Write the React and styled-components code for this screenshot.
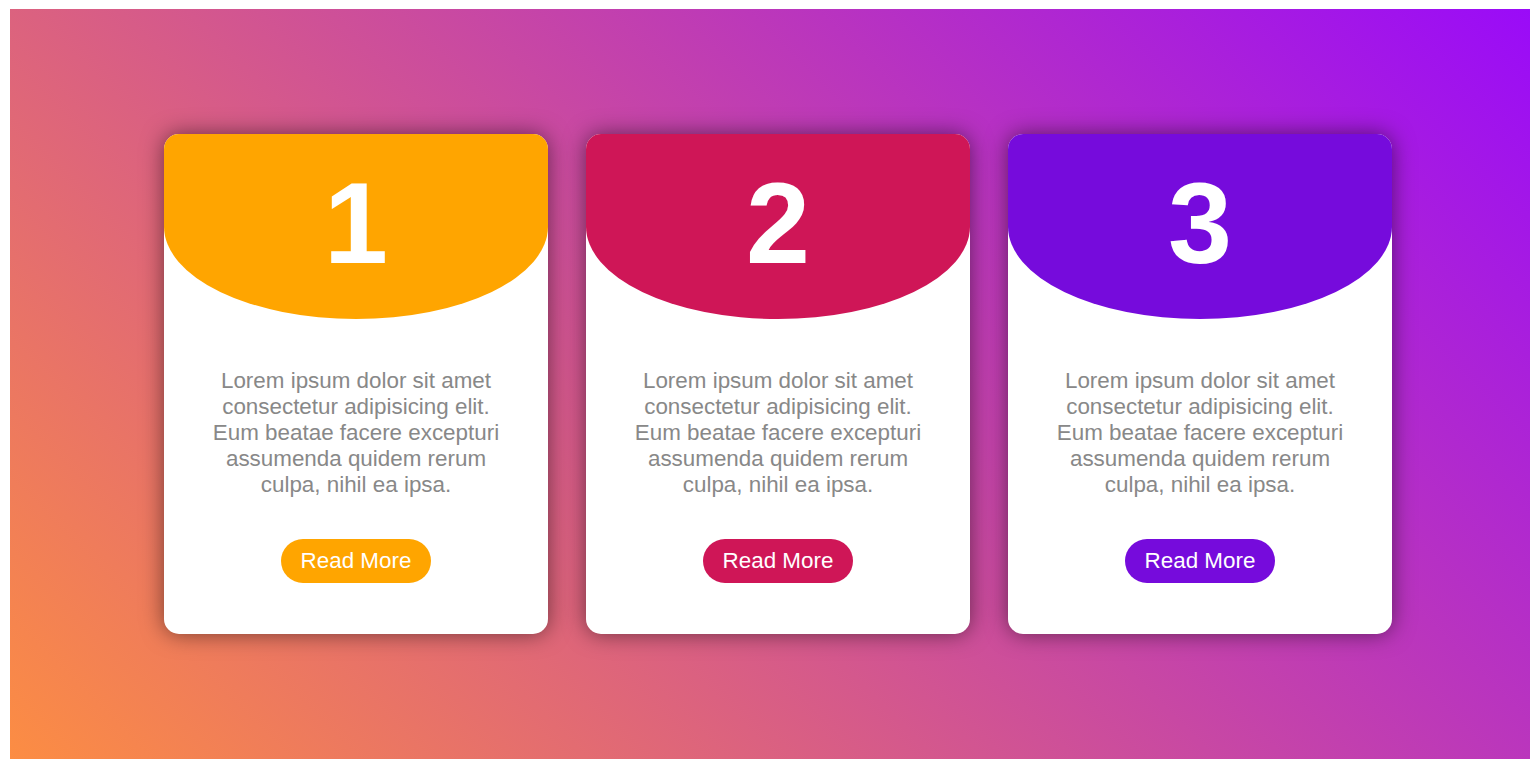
import React from 'react';
import styled, { createGlobalStyle } from 'styled-components';

const GlobalStyle = createGlobalStyle`
  body {
    margin: 0;
    font-family: "Liberation Sans", Arial, sans-serif;
    background: #fff;
  }
`;

const Page = styled.div`
  margin: 9px 10px 8px;
  height: 750px;
  background: linear-gradient(45deg, #fc8d43, #9a0bf8);
  display: flex;
  justify-content: center;
  align-items: center;
  gap: 38px;
  padding-left: 16px;
  box-sizing: border-box;
`;

const Card = styled.div`
  width: 384px;
  height: 500px;
  background: #fff;
  border-radius: 15px;
  overflow: hidden;
  box-shadow: 0 0 22px rgba(0, 0, 0, 0.5);
  display: flex;
  flex-direction: column;
  align-items: center;
`;

const Header = styled.div`
  width: 100%;
  height: 185px;
  flex-shrink: 0;
  background: ${(p) => p.$color};
  border-radius: 0 0 50% 50%;
  display: flex;
  justify-content: center;
  align-items: flex-start;
  padding-top: 32px;
  box-sizing: border-box;
`;

const Number = styled.span`
  font-size: 115px;
  line-height: 1;
  font-weight: bold;
  color: #fff;
`;

const Text = styled.p`
  margin: 49px 0 0;
  padding: 0 38px;
  font-size: 22.4px;
  line-height: 26px;
  color: #888;
  text-align: center;
`;

const Button = styled.button`
  margin-top: 41px;
  height: 44px;
  padding: 0 20px;
  border: none;
  border-radius: 22px;
  background: ${(p) => p.$color};
  color: #fff;
  font-family: "Liberation Sans", Arial, sans-serif;
  font-size: 22.4px;
  cursor: pointer;
`;

const cards = [
  { num: 1, color: '#ffa500' },
  { num: 2, color: '#cf1657' },
  { num: 3, color: '#760bdc' },
];

const App = () => (
  <>
    <GlobalStyle />
    <Page>
      {cards.map((c) => (
        <Card key={c.num}>
          <Header $color={c.color}>
            <Number>{c.num}</Number>
          </Header>
          <Text>
            Lorem ipsum dolor sit amet consectetur adipisicing elit. Eum beatae facere excepturi assumenda quidem rerum culpa, nihil ea ipsa.
          </Text>
          <Button $color={c.color}>Read More</Button>
        </Card>
      ))}
    </Page>
  </>
);

export default App;
